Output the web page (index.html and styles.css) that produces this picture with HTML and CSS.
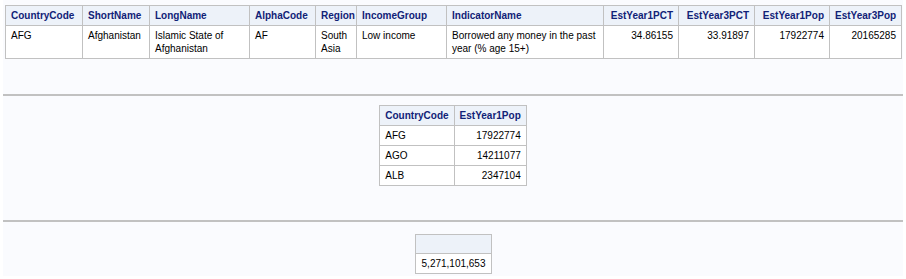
FILE: index.html
```html
<!doctype html>
<html lang="en">
<head>
	<meta charset="UTF-8">
	<title>SAS Output</title>
	<link rel="stylesheet" href="styles.css">
</head>
<body>
	<div class="page">
		<div class="proc">
			<table class="table wide">
				<colgroup>
					<col class="c1"><col class="c2"><col class="c3"><col class="c4"><col class="c5"><col class="c6">
					<col class="c7"><col class="c8"><col class="c9"><col class="c10"><col class="c11">
				</colgroup>
				<thead>
					<tr>
						<th>CountryCode</th>
						<th>ShortName</th>
						<th>LongName</th>
						<th>AlphaCode</th>
						<th>Region</th>
						<th>IncomeGroup</th>
						<th>IndicatorName</th>
						<th class="r">EstYear1PCT</th>
						<th class="r">EstYear3PCT</th>
						<th class="r">EstYear1Pop</th>
						<th class="r">EstYear3Pop</th>
					</tr>
				</thead>
				<tbody>
					<tr>
						<td>AFG</td>
						<td>Afghanistan</td>
						<td>Islamic State of Afghanistan</td>
						<td>AF</td>
						<td>South Asia</td>
						<td>Low income</td>
						<td>Borrowed any money in the past year (% age 15+)</td>
						<td class="r">34.86155</td>
						<td class="r">33.91897</td>
						<td class="r">17922774</td>
						<td class="r">20165285</td>
					</tr>
				</tbody>
			</table>
		</div>
		<hr class="pagebreak">
		<div class="proc center">
			<table class="table">
				<thead>
					<tr>
						<th>CountryCode</th>
						<th class="r">EstYear1Pop</th>
					</tr>
				</thead>
				<tbody>
					<tr><td>AFG</td><td class="r">17922774</td></tr>
					<tr><td>AGO</td><td class="r">14211077</td></tr>
					<tr><td>ALB</td><td class="r">2347104</td></tr>
				</tbody>
			</table>
		</div>
		<hr class="pagebreak last">
		<div class="proc center">
			<table class="table sum">
				<thead>
					<tr><th></th></tr>
				</thead>
				<tbody>
					<tr><td class="r">5,271,101,653</td></tr>
				</tbody>
			</table>
		</div>
	</div>
</body>
</html>
```

FILE: styles.css
```css
* { margin: 0; padding: 0;}
html { background: #fff;}
body { font-size: 10px; font-family: "Liberation Sans", Arial, sans-serif; color: #000; background: #fff;}
.page { background: #fafbfe; margin: 0 3px; padding: 5px 2px 3px; height: 268px;}
.proc { display: flex;}
.proc.center { justify-content: center;}
.table { border-collapse: collapse; border: 1px solid #c1c1c1;}
.table th, .table td { border: 1px solid #c1c1c1; padding: 3px 5px; line-height: 13px; text-align: left; vertical-align: top;}
.table th { background: #edf2f9; color: #112277; font-weight: bold; height: 13px;}
.table td { background: #fff;}
.table .r { text-align: right;}
.wide { width: 896px; table-layout: fixed;}
.wide .c1 { width: 77px;}
.wide .c2 { width: 67px;}
.wide .c3 { width: 100px;}
.wide .c4 { width: 66px;}
.wide .c5 { width: 41px;}
.wide .c6 { width: 90px;}
.wide .c7 { width: 157px;}
.wide .c8 { width: 75px;}
.wide .c9 { width: 76px;}
.wide .c10 { width: 75px;}
.wide .c11 { width: 72px;}
.pagebreak { border: 0; border-top: 2px solid #c1c1c1; margin: 35px -2px 9px;}
.pagebreak.last { margin: 34px -2px 12px;}
.sum { width: 77px;}
.sum th { height: 12px;}
```
